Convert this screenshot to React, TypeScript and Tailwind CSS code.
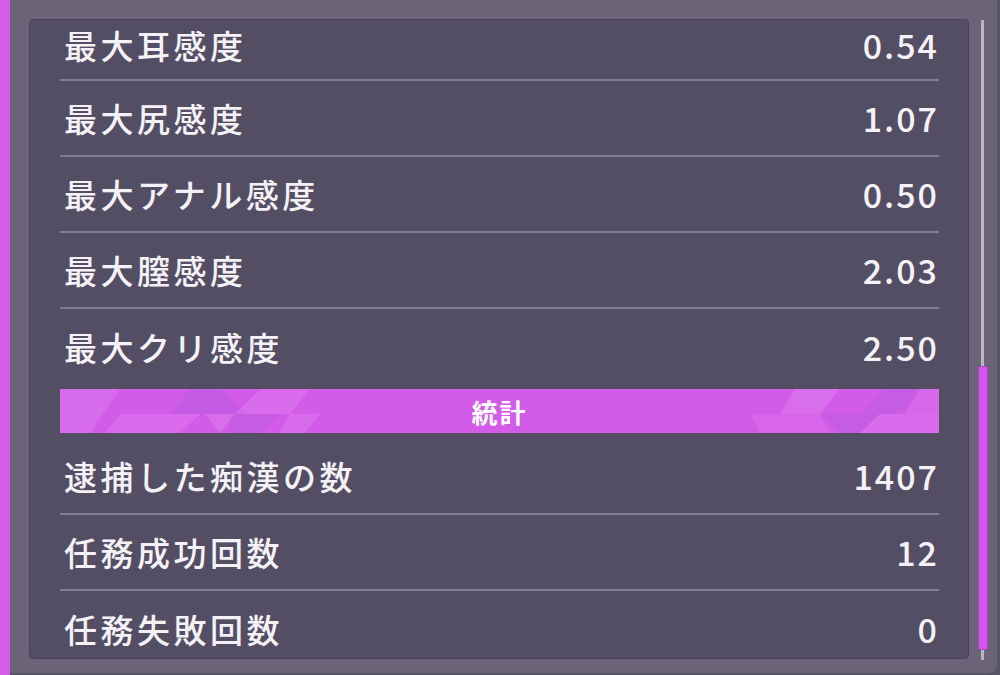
import React from 'react';

type Row = { label: string; value: string };

const sensitivity: Row[] = [
    { label: '最大耳感度', value: '0.54' },
    { label: '最大尻感度', value: '1.07' },
    { label: '最大アナル感度', value: '0.50' },
    { label: '最大膣感度', value: '2.03' },
    { label: '最大クリ感度', value: '2.50' },
];

const stats: Row[] = [
    { label: '逮捕した痴漢の数', value: '1407' },
    { label: '任務成功回数', value: '12' },
    { label: '任務失敗回数', value: '0' },
];

const font = { fontFamily: '"Noto Sans CJK JP", "Noto Sans", sans-serif' };

function StatRow({ row, divider, first }: { row: Row; divider: boolean; first?: boolean }) {
    return (
        <div className={first ? 'flex flex-col h-[61px] shrink-0' : 'flex flex-col h-[76px] shrink-0'}>
            <div
                className={
                    first
                        ? 'flex-1 min-h-0 flex items-center justify-between pl-[4px] pb-[10px] font-medium text-[#f4f2f7]'
                        : 'flex-1 min-h-0 flex items-center justify-between pl-[4px] font-medium text-[#f4f2f7]'
                }
            >
                <span className="text-[33px] leading-[40px] tracking-[3.5px]">{row.label}</span>
                <span className="text-[34px] leading-[40px] tracking-[2px]">{row.value}</span>
            </div>
            {divider && <div className="h-[2px] shrink-0 bg-[#857d94]" />}
        </div>
    );
}

function Banner() {
    return (
        <div className="relative h-[44px] mt-[4px] mb-[6px] bg-[#d25be8] flex items-center justify-center overflow-hidden shrink-0">
            <svg className="absolute inset-0" width="879" height="44" viewBox="0 0 879 44">
                {/* left triangles */}
                <polygon points="0,0 60,0 30,44 0,44" fill="#e08af0" opacity="0.35" />
                <polygon points="60,25 140,25 120,44 45,44" fill="#e27cf0" opacity="0.5" />
                <polygon points="110,25 130,0 160,0 185,25" fill="#b85ae0" opacity="0.5" />
                <polygon points="170,25 220,25 200,44 170,44" fill="#b85ae0" opacity="0.45" />
                <polygon points="145,25 175,25 160,44" fill="#e48cf3" opacity="0.4" />
                <polygon points="200,0 250,0 230,25 175,25" fill="#e48cf3" opacity="0.35" />
                <polygon points="230,25 260,25 245,44 220,44" fill="#e48cf3" opacity="0.35" />
                {/* right triangles */}
                <polygon points="690,25 760,25 770,44 700,44" fill="#e27cf0" opacity="0.35" />
                <polygon points="735,0 780,0 760,25 720,25" fill="#e48cf3" opacity="0.4" />
                <polygon points="760,25 820,25 800,44 780,44" fill="#b85ae0" opacity="0.45" />
                <polygon points="800,25 825,0 860,0 840,25" fill="#b85ae0" opacity="0.45" />
                <polygon points="820,25 879,25 879,44 800,44" fill="#e48cf3" opacity="0.35" />
                <polygon points="860,0 879,0 879,25 845,25" fill="#e08af0" opacity="0.3" />
            </svg>
            <span className="relative text-white text-[26px] font-bold tracking-[2px]">統計</span>
        </div>
    );
}

export default function App() {
    return (
        <div className="w-[1000px] h-[675px] flex bg-[#5a5467] overflow-hidden" style={font}>
            {/* left accent strip */}
            <div className="w-[10px] h-full bg-[#d45ee9] shrink-0" />

            {/* frame */}
            <div className="w-[987px] h-[673px] bg-[#6b6377] rounded-br-[8px] flex pl-[19px] pt-[19px] pb-[14px] shrink-0">
                {/* inner panel */}
                <div className="w-[940px] h-full bg-[#544e64] border border-[#47425a] rounded-[4px] overflow-hidden pl-[30px] pr-[29px] shrink-0">
                    <div className="flex flex-col">
                        {sensitivity.map((r, i) => (
                            <StatRow key={r.label} row={r} first={i === 0} divider={i < sensitivity.length - 1} />
                        ))}
                        <Banner />
                        {stats.map((r, i) => (
                            <StatRow key={r.label} row={r} divider={i < stats.length - 1} />
                        ))}
                    </div>
                </div>

                {/* scrollbar */}
                <div className="w-[28px] h-full flex justify-center shrink-0 pt-[1px]">
                    <div className="relative w-[10px] h-[640px]">
                        <div className="absolute left-[3px] top-0 w-[3px] h-full bg-[#b8b6c4]" />
                        <div className="absolute left-0 top-[346px] w-[10px] h-[284px] bg-[#d655f0] rounded-[2px] border border-[#9d4bb8]" />
                    </div>
                </div>
            </div>
        </div>
    );
}
